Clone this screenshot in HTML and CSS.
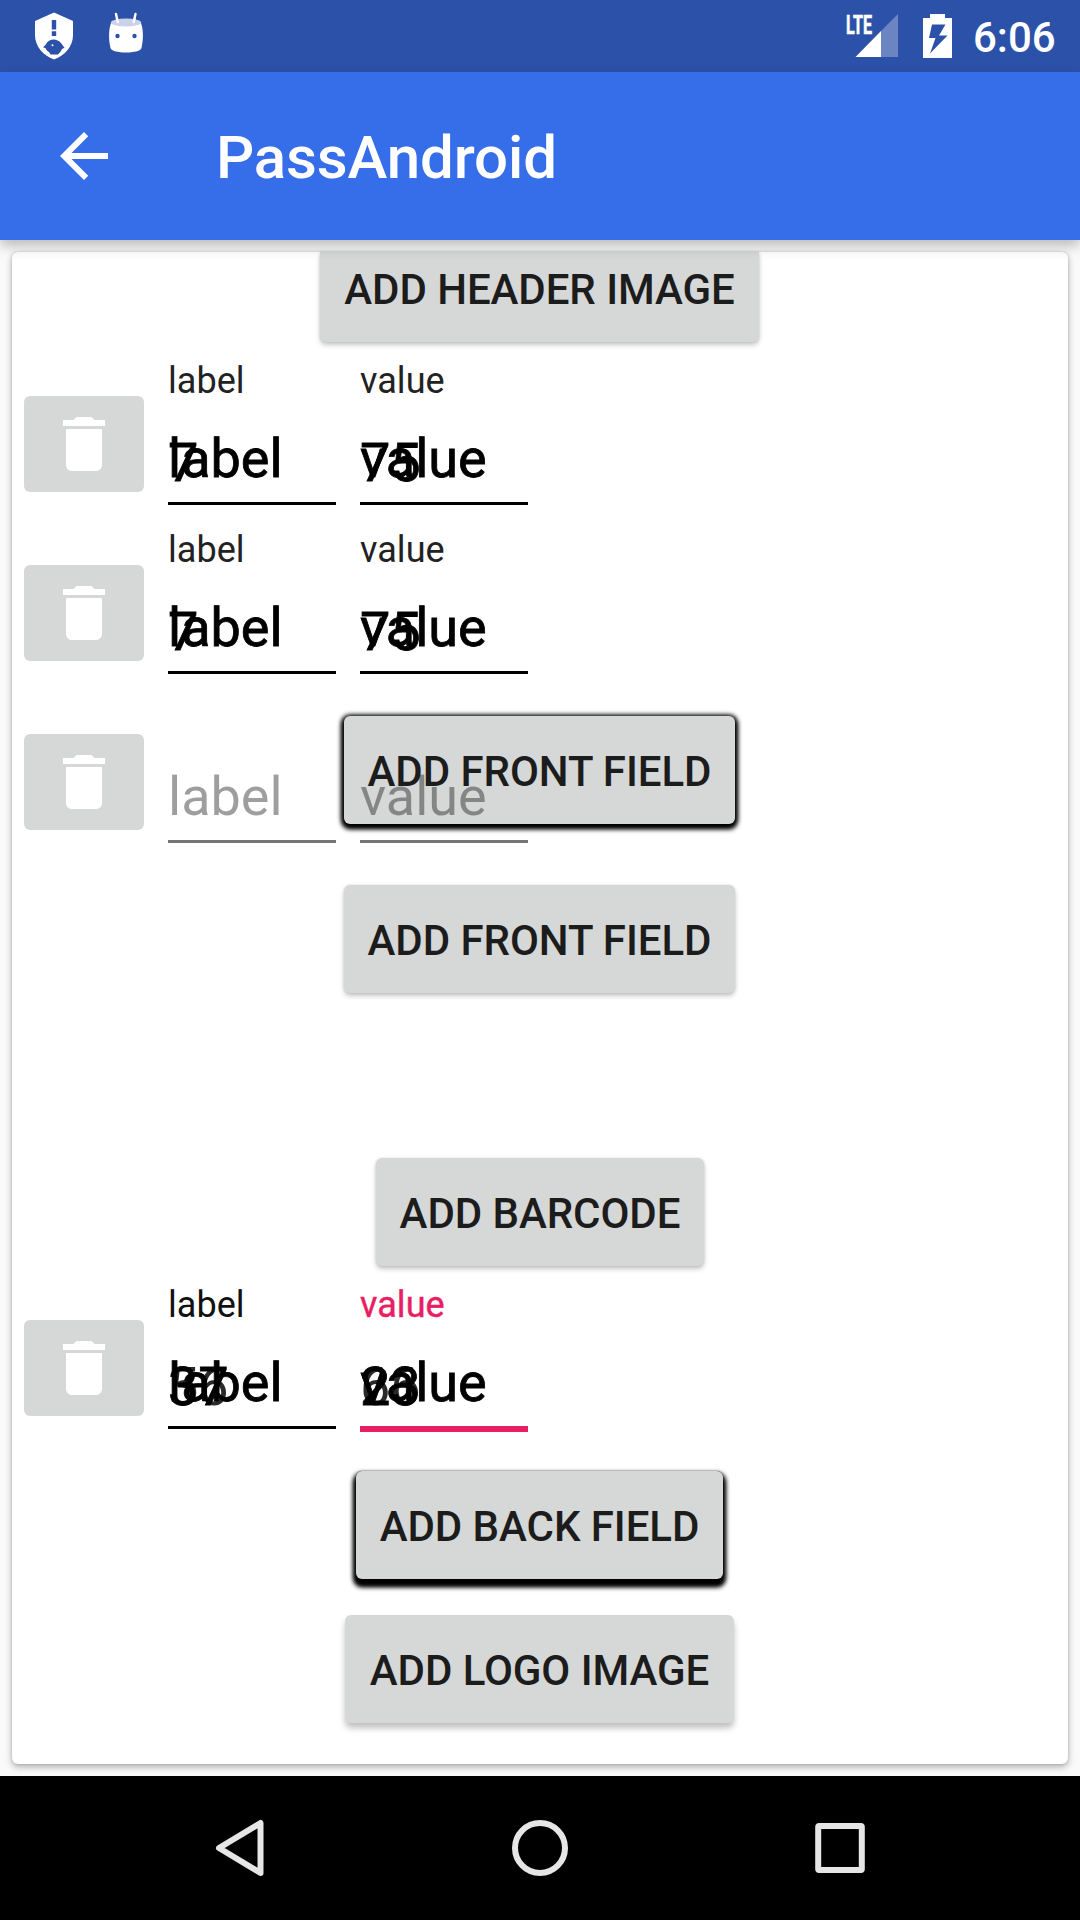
FILE: index.html
```html
<!DOCTYPE html>
<html lang="en">
<head>
<meta charset="utf-8">
<title>PassAndroid</title>
<link rel="stylesheet" href="styles.css">
</head>
<body>
<svg class="defs" width="0" height="0">
  <symbol id="trash" viewBox="0 0 24 24"><path fill="#fff" d="M6 19c0 1.1.9 2 2 2h8c1.100 0 2-.9 2-2V7H6v12zM19 4h-3.500l-1-1h-5l-1 1H5v2h14V4z"/></symbol>
</svg>
<header class="status">
  <svg class="shield" width="40" height="48" viewBox="0 0 40 48">
    <path fill="#fff" d="M20 .6 39 9v14c0 11.500-8 20.500-19 24.500C9 43.500 1 34.500 1 23V9z"/>
    <path fill="#2c51a8" d="M17.800 8h4.400v9.500h-4.400zM17.800 19.300h4.400V24h-4.400zM13 30.500c3.500-4.300 10.500-4 14 .5 1.200 1.600 2.600 3.200 3.600 5-2 .2-2.600 1-3.100 2-.8 1.700-2.500 3.200-3.500 4.500h-7.500c-.8-2.300-2.300-2.600-4-4.500-.5-.8-.6-1.700-1.500-2l-2-.8c1.500-1 3-2.500 4-4.700z"/>
    <circle cx="18.500" cy="33.300" r="1" fill="#fff"/>
  </svg>
  <svg class="droid" width="36" height="42" viewBox="0 0 36 42">
    <path fill="none" stroke="#fff" stroke-width="2.400" stroke-linecap="round" d="M8 2l2 9M27.500 2l-2 9"/>
    <path fill="#fff" d="M3 11C.5 18 .5 27 2.500 36c1 6 30 6 31 0 2-9 2-18-.5-25z"/>
    <ellipse cx="18" cy="10.500" rx="15.200" ry="4" fill="#c9d2e8"/>
    <path fill="none" stroke="#fff" stroke-width="2.400" stroke-linecap="round" d="M9 7l.8 3M26.500 7l-.8 3"/>
    <circle cx="9.500" cy="24" r="2.200" fill="#2c51a8"/><circle cx="26.500" cy="24" r="2.200" fill="#2c51a8"/>
  </svg>
  <div class="signal">
    <svg width="54" height="44" viewBox="0 0 54 44"><path fill="#fff" fill-opacity=".3" d="M53 0v43H36V17z"/><path fill="#fff" d="M36 17v26H10.500z"/></svg>
    <span class="lte">LTE</span>
  </div>
  <svg class="battery" width="29" height="44" viewBox="0 0 29 44"><path fill="#fff" fill-rule="evenodd" d="M7 0h15v4h7v40H0V4h7zM9 10.500 6 24h6.500L7 39.500 24.500 21.500H16L22.500 10.500z"/></svg>
  <span class="clock">6:06</span>
</header>
<div class="appbar">
  <svg class="back" width="72" height="72" viewBox="0 0 24 24"><path fill="#fff" d="M20 11H7.830l5.590-5.590L12 4l-8 8 8 8 1.410-1.410L7.830 13H20v-2z"/></svg>
  <h1 class="title">PassAndroid</h1>
</div>
<main class="content">
  <section class="card">
    <button class="btn btn-header">ADD HEADER IMAGE</button>

    <div class="row">
      <button class="delete"><svg width="72" height="72"><use href="#trash"/></svg></button>
      <div class="field"><span class="caption">label</span><div class="input"><span class="hint">label</span><span class="text">7</span></div></div>
      <div class="field"><span class="caption">value</span><div class="input"><span class="hint">value</span><span class="text">75</span></div></div>
    </div>
    <div class="row">
      <button class="delete"><svg width="72" height="72"><use href="#trash"/></svg></button>
      <div class="field"><span class="caption">label</span><div class="input"><span class="hint">label</span><span class="text">7</span></div></div>
      <div class="field"><span class="caption">value</span><div class="input"><span class="hint">value</span><span class="text">75</span></div></div>
    </div>
    <div class="row empty">
      <button class="btn raised btn-front btn-over">ADD FRONT FIELD</button>
      <button class="delete"><svg width="72" height="72"><use href="#trash"/></svg></button>
      <div class="field"><span class="caption"></span><div class="input"><span class="hint">label</span></div></div>
      <div class="field"><span class="caption"></span><div class="input"><span class="hint">value</span></div></div>
    </div>

    <button class="btn btn-front">ADD FRONT FIELD</button>
    <button class="btn btn-barcode">ADD BARCODE</button>

    <div class="row">
      <button class="delete"><svg width="72" height="72"><use href="#trash"/></svg></button>
      <div class="field dark"><span class="caption">label</span><div class="input"><span class="text ghost">56</span><span class="hint">label</span><span class="text">37</span></div></div>
      <div class="field focused"><span class="caption">value</span><div class="input"><span class="text ghost">66</span><span class="hint">value</span><span class="text">23</span></div></div>
    </div>

    <button class="btn raised deep btn-back">ADD BACK FIELD</button>
    <button class="btn low btn-logo">ADD LOGO IMAGE</button>
  </section>
</main>
<nav class="nav">
  <svg width="56" height="60" viewBox="0 0 56 60"><path fill="none" stroke="#e6e6e6" stroke-width="6" stroke-linejoin="round" d="M48.500 5v50L7 30z"/></svg>
  <svg width="56" height="60" viewBox="0 0 56 60"><circle cx="28" cy="30" r="25" fill="none" stroke="#e6e6e6" stroke-width="6"/></svg>
  <svg width="56" height="60" viewBox="0 0 56 60"><rect x="6.200" y="8" width="43.600" height="44" rx="1" fill="none" stroke="#e6e6e6" stroke-width="6"/></svg>
</nav>
</body>
</html>
```
FILE: styles.css
```css
* { box-sizing: border-box; }
body {
  margin: 0;
  width: 1080px;
  height: 1920px;
  display: flex;
  flex-direction: column;
  overflow: hidden;
  background: #fafafa;
  font-family: Roboto, "Noto Sans", sans-serif;
}
button { border: 0; padding: 0; font: inherit; }
svg { display: block; flex: none; }
.defs { position: absolute; }

.status {
  height: 72px;
  flex: none;
  display: flex;
  align-items: flex-start;
  background: #2c51a8;
  color: #fff;
}
.shield { margin: 12px 0 0 34px; }
.droid { margin: 12px 0 0 34px; }
.signal { position: relative; margin: 14px 0 0 auto; }
.lte {
  position: absolute;
  left: 1px;
  top: 0;
  font-size: 26px;
  line-height: 22px;
  font-weight: 700;
  -webkit-text-stroke: .6px #fff;
  transform: scaleX(.62);
  transform-origin: 0 0;
}
.battery { margin: 14px 0 0 24px; }
.clock {
  width: 107px;
  margin: 14px 0 0 21px;
  font-size: 42px;
  line-height: 48px;
  font-weight: 500;
}

.appbar {
  height: 168px;
  flex: none;
  display: flex;
  align-items: center;
  padding-left: 48px;
  background: #366de8;
  color: #fff;
  position: relative;
  z-index: 2;
  box-shadow: 0 6px 12px rgba(0, 0, 0, .25);
}
.title { margin: 4px 0 0 96px; font-size: 60px; line-height: 72px; font-weight: 500; letter-spacing: -.12px; }

.content { flex: 1; min-height: 0; padding: 12px; }
.card {
  height: 1512px;
  border-radius: 6px;
  background: #fff;
  box-shadow: 0 3px 7px rgba(0, 0, 0, .3), 0 0 3px rgba(0, 0, 0, .15);
  display: flex;
  flex-direction: column;
  align-items: center;
}

.btn {
  flex: none;
  height: 108px;
  padding-top: 3px;
  border-radius: 6px;
  background: #d6d7d7;
  color: #1c1c1c;
  font-size: 42px;
  line-height: 105px;
  font-weight: 500;
  letter-spacing: -.06px;
  white-space: nowrap;
  text-align: center;
  box-shadow: 0 3px 5px rgba(0, 0, 0, .22), 0 0 3px rgba(0, 0, 0, .1);
}
.btn-header {
  width: 439px;
  height: 90px;
  line-height: 72px;
  padding-top: 2px;
  padding-bottom: 16px;
  border-radius: 0 0 6px 6px;
  margin-right: 1px;
  margin-bottom: 6px;
}
.raised { box-shadow: 0 3px 5px 2px #000, 0 1px 5px 2px #000; }
.deep { box-shadow: 0 6px 5px 2px #000, 0 4px 5px 2px #000, 0 0 1px #000; }
.low { box-shadow: 0 5px 6px rgba(0, 0, 0, .25); }
.btn-front { width: 391px; margin-top: 30px; margin-right: 1px; }
.btn-barcode { width: 328px; margin-top: 165px; margin-bottom: 6px; }
.btn-back { width: 367px; margin-top: 30px; margin-right: 1px; }
.btn-logo { width: 389px; margin-top: 36px; margin-right: 1px; }
.btn-over { position: absolute; left: 332px; top: 30px; margin: 0; }

.row {
  position: relative;
  width: 100%;
  height: 169px;
  flex: none;
  display: flex;
  gap: 24px;
  padding-left: 12px;
}
.delete {
  width: 120px;
  height: 96px;
  margin-top: 48px;
  border-radius: 6px;
  background: #d6d7d7;
  display: flex;
  justify-content: center;
  align-items: center;
}
.field { position: relative; width: 168px; height: 157px; border-bottom: 3px solid #000; color: #000; }
.caption {
  display: block;
  height: 42px;
  margin-top: 12px;
  font-size: 36px;
  line-height: 42px;
  color: #222;
  letter-spacing: .05px;
}
.input { display: grid; margin-top: 25px; font-size: 54px; line-height: 64px; }
.hint, .text { grid-area: 1 / 1; -webkit-text-stroke: .8px currentColor; }
.text { padding-top: 4px; }
.ghost { color: #2a2a2a; -webkit-text-stroke: 0; }
.dark .caption { color: #111; }
.focused { height: 160px; border-bottom: 6px solid #e91e63; }
.focused .caption { color: #e91e63; -webkit-text-stroke: .4px currentColor; }
.empty .field { border-color: #757575; }
.empty .hint { color: rgba(0, 0, 0, .38); -webkit-text-stroke: 0; }

.nav {
  height: 144px;
  flex: none;
  display: flex;
  justify-content: center;
  align-items: center;
  gap: 244px;
  background: #000;
  position: relative;
}
```
